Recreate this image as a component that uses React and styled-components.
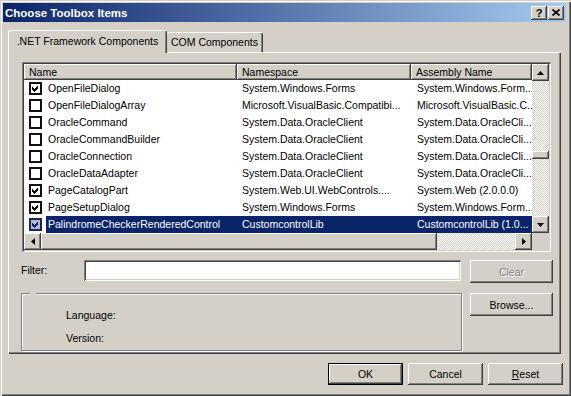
import React from "react";
import styled, { createGlobalStyle } from "styled-components";

const face = "#d4d0c8";
const raised = `inset -1px -1px #404040, inset 1px 1px #fff, inset -2px -2px #808080, inset 2px 2px ${face}`;
const sunken = `inset 1px 1px #808080, inset -1px -1px #fff, inset 2px 2px #404040, inset -2px -2px ${face}`;

const rows = [
  { on: true, name: "OpenFileDialog", ns: "System.Windows.Forms", asm: "System.Windows.Form..." },
  { on: false, name: "OpenFileDialogArray", ns: "Microsoft.VisualBasic.Compatibi...", asm: "Microsoft.VisualBasic.C..." },
  { on: false, name: "OracleCommand", ns: "System.Data.OracleClient", asm: "System.Data.OracleCli..." },
  { on: false, name: "OracleCommandBuilder", ns: "System.Data.OracleClient", asm: "System.Data.OracleCli..." },
  { on: false, name: "OracleConnection", ns: "System.Data.OracleClient", asm: "System.Data.OracleCli..." },
  { on: false, name: "OracleDataAdapter", ns: "System.Data.OracleClient", asm: "System.Data.OracleCli..." },
  { on: true, name: "PageCatalogPart", ns: "System.Web.UI.WebControls....", asm: "System.Web (2.0.0.0)" },
  { on: true, name: "PageSetupDialog", ns: "System.Windows.Forms", asm: "System.Windows.Form..." },
  { on: true, sel: true, name: "PalindromeCheckerRenderedControl", ns: "CustomcontrolLib", asm: "CustomcontrolLib (1.0..." },
];

function Arrow({ dir }) {
  const pts = {
    up: "3.5,0 7,4 0,4",
    down: "0,0 7,0 3.5,4",
    left: "4,0 4,7 0,3.5",
    right: "0,0 0,7 4,3.5",
  }[dir];
  const vertical = dir === "up" || dir === "down";
  return (
    <svg width={vertical ? 7 : 4} height={vertical ? 4 : 7} viewBox={vertical ? "0 0 7 4" : "0 0 4 7"}>
      <polygon points={pts} fill="#000" />
    </svg>
  );
}

function Check({ color }) {
  return (
    <svg width="9" height="9" viewBox="0 0 9 9" shapeRendering="crispEdges">
      <polygon points="1,3 3,5 7,1 7,4 3,8 1,6" fill={color} />
    </svg>
  );
}

function App() {
  return (
    <Window>
      <GlobalResets />
      <TitleBar>
        <TitleText>Choose Toolbox Items</TitleText>
        <CaptionButton>?</CaptionButton>
        <CaptionButton>
          <svg width="8" height="7" viewBox="0 0 8 7">
            <path d="M0.5 0.5 L7.5 6.5 M7.5 0.5 L0.5 6.5" stroke="#000" strokeWidth="1.6" />
          </svg>
        </CaptionButton>
      </TitleBar>

      <Body>
        <TabStrip>
          <Tab active>.NET Framework Components</Tab>
          <Tab>COM Components</Tab>
        </TabStrip>

        <Panel>
          <ListView>
            <ListArea>
              <Header>
                <HeaderCell>Name</HeaderCell>
                <HeaderCell>Namespace</HeaderCell>
                <HeaderCell>Assembly Name</HeaderCell>
              </Header>
              {rows.map((r) => (
                <Row key={r.name}>
                  <CheckCell>
                    <CheckBox sel={r.sel}>{r.on && <Check color={r.sel ? "#0a246a" : "#000"} />}</CheckBox>
                  </CheckCell>
                  <Cell sel={r.sel} pad={2}>{r.name}</Cell>
                  <Cell sel={r.sel} pad={5}>{r.ns}</Cell>
                  <Cell sel={r.sel} pad={6}>{r.asm}</Cell>
                </Row>
              ))}
            </ListArea>
            <VScroll>
              <ScrollButton><Arrow dir="up" /></ScrollButton>
              <Track size={70} />
              <Thumb vertical />
              <Track grow />
              <ScrollButton><Arrow dir="down" /></ScrollButton>
            </VScroll>
            <HScroll>
              <ScrollButton><Arrow dir="left" /></ScrollButton>
              <Thumb size={396} />
              <Track grow />
              <ScrollButton><Arrow dir="right" /></ScrollButton>
            </HScroll>
            <Corner />
          </ListView>

          <FilterRow>
            <FilterLabel>Filter:</FilterLabel>
            <FilterInput />
            <Button disabled width={83} height={23} gap={9}>Clear</Button>
          </FilterRow>

          <InfoRow>
            <GroupBox>
              <span>Language:</span>
              <span>Version:</span>
            </GroupBox>
            <Button width={83} height={23} gap={8}>Browse...</Button>
          </InfoRow>
        </Panel>

        <Footer>
          <Button primary width={75} height={22}>OK</Button>
          <Button width={75} height={22}>Cancel</Button>
          <Button width={75} height={22}><u>R</u>eset</Button>
        </Footer>
      </Body>
    </Window>
  );
}

const GlobalResets = createGlobalStyle`
  * {
    box-sizing: border-box;
  }
  html, body {
    margin: 0;
    padding: 0;
    background: ${face};
  }
  body {
    font-family: "Liberation Sans", Arial, sans-serif;
    font-size: 10.5px;
    color: #000;
  }
`;

const Window = styled.div`
  width: 571px;
  height: 396px;
  display: flex;
  flex-direction: column;
  padding: 3px 5px 3px 3px;
  background: ${face};
  box-shadow: inset 1px 1px ${face}, inset 2px 2px #fff, inset -1px -1px #404040,
    inset -2px -2px #808080;
`;

const TitleBar = styled.div`
  height: 19px;
  display: flex;
  align-items: center;
  gap: 1px;
  padding: 0 2px;
  background: linear-gradient(to right, #0a246a, #a6caf0);
  color: #fff;
  font-weight: bold;
  font-size: 11.5px;
`;

const TitleText = styled.div`
  flex: 1;
`;

const CaptionButton = styled.div`
  width: 16px;
  height: 14px;
  display: flex;
  align-items: center;
  justify-content: center;
  background: ${face};
  box-shadow: ${raised};
  color: #000;
  font-size: 11px;
  font-weight: bold;
`;

const Body = styled.div`
  display: flex;
  flex-direction: column;
  padding: 0 5px;
`;

const TabStrip = styled.div`
  margin-top: 8px;
  height: 23px;
  margin-bottom: -1px;
  display: flex;
  align-items: flex-end;
  position: relative;
  z-index: 1;
`;

const Tab = styled.div`
  width: ${(p) => (p.active ? 159 : 96)}px;
  height: ${(p) => (p.active ? 23 : 20)}px;
  margin-bottom: ${(p) => (p.active ? 0 : 1)}px;
  display: flex;
  align-items: center;
  justify-content: center;
  padding-bottom: ${(p) => (p.active ? 3 : 1)}px;
  background: ${face};
  border-top: 1px solid #fff;
  border-left: ${(p) => (p.active ? "1px solid #fff" : "none")};
  border-right: 1px solid #404040;
  box-shadow: inset -1px 0 #808080;
  border-radius: 3px 3px 0 0;
  white-space: nowrap;
`;

const Panel = styled.div`
  height: 302px;
  display: flex;
  flex-direction: column;
  align-items: flex-start;
  padding: 9px 8px 0 13px;
  border-top: 1px solid #fff;
  border-left: 1px solid #fff;
  box-shadow: inset -1px -1px #404040, inset -2px -2px #808080;
`;

const ListView = styled.div`
  width: 529px;
  height: 190px;
  padding: 2px;
  background: #fff;
  box-shadow: ${sunken};
  display: grid;
  grid-template-columns: 1fr 17px;
  grid-template-rows: 1fr 17px;
`;

const ListArea = styled.div`
  display: flex;
  flex-direction: column;
  overflow: hidden;
`;

const Header = styled.div`
  height: 16px;
  display: grid;
  grid-template-columns: 213px 174px 1fr;
`;

const HeaderCell = styled.div`
  background: ${face};
  box-shadow: inset -1px -1px #404040, inset 1px 1px #fff, inset -2px -2px #808080;
  padding-left: 5px;
  line-height: 16px;
  white-space: nowrap;
  overflow: hidden;
`;

const Row = styled.div`
  height: 17px;
  display: grid;
  grid-template-columns: 22px 191px 174px 1fr;
`;

const CheckCell = styled.div`
  display: flex;
  align-items: center;
  padding-left: 5px;
`;

const CheckBox = styled.div`
  width: 13px;
  height: 13px;
  display: flex;
  align-items: center;
  justify-content: center;
  border: 2px solid ${(p) => (p.sel ? "#1c2550" : "#111")};
  background: ${(p) => (p.sel ? "#b2b8d0" : "#fff")};
`;

const Cell = styled.div`
  line-height: 17px;
  padding-left: ${(p) => p.pad}px;
  white-space: nowrap;
  overflow: hidden;
  background: ${(p) => (p.sel ? "#0a246a" : "transparent")};
  color: ${(p) => (p.sel ? "#fff" : "#000")};
`;

const VScroll = styled.div`
  display: flex;
  flex-direction: column;
`;

const HScroll = styled.div`
  display: flex;
`;

const Corner = styled.div`
  background: ${face};
`;

const ScrollButton = styled.div`
  width: 17px;
  height: 17px;
  flex: none;
  display: flex;
  align-items: center;
  justify-content: center;
  background: ${face};
  box-shadow: ${raised};
`;

const Track = styled.div`
  flex: ${(p) => (p.grow ? "1" : `0 0 ${p.size}px`)};
  background: repeating-conic-gradient(${face} 0 25%, #fff 0 50%) 0 0 / 2px 2px;
`;

const Thumb = styled.div`
  flex: ${(p) => (p.vertical ? "0 0 8px" : `0 0 ${p.size}px`)};
  background: ${face};
  box-shadow: ${raised};
`;

const FilterRow = styled.div`
  margin-top: 8px;
  margin-left: -1px;
  display: flex;
  align-items: flex-start;
`;

const FilterLabel = styled.div`
  width: 63px;
  line-height: 21px;
`;

const FilterInput = styled.div`
  width: 377px;
  height: 21px;
  background: #fff;
  box-shadow: ${sunken};
`;

const Button = styled.div`
  width: ${(p) => p.width}px;
  height: ${(p) => p.height}px;
  margin-left: ${(p) => p.gap || 0}px;
  flex: none;
  display: flex;
  align-items: center;
  justify-content: center;
  background: ${face};
  box-shadow: ${(p) =>
    p.primary
      ? `inset 0 0 0 1px #000, inset -2px -2px #404040, inset 2px 2px #fff, inset -3px -3px #808080`
      : raised};
  color: ${(p) => (p.disabled ? "#808080" : "#000")};
  text-shadow: ${(p) => (p.disabled ? "1px 1px 0 #fff" : "none")};
  white-space: nowrap;

  & u {
    text-decoration-thickness: 1px;
    text-underline-offset: 1px;
  }
`;

const InfoRow = styled.div`
  margin-top: 10px;
  margin-left: -1px;
  display: flex;
  align-items: flex-start;
`;

const GroupBox = styled.div`
  position: relative;
  width: 441px;
  height: 58px;
  display: flex;
  flex-direction: column;
  gap: 10px;
  padding: 15px 0 0 44px;
  line-height: 13px;
  border: 1px solid #808080;
  box-shadow: inset 1px 1px #fff, 1px 1px #fff;

  &::before {
    content: "";
    position: absolute;
    top: -1px;
    left: 8px;
    width: 6px;
    height: 2px;
    background: ${face};
  }
`;

const Footer = styled.div`
  margin-top: 9px;
  margin-right: -2px;
  display: flex;
  justify-content: flex-end;
  gap: 5px;
`;

export default App;
